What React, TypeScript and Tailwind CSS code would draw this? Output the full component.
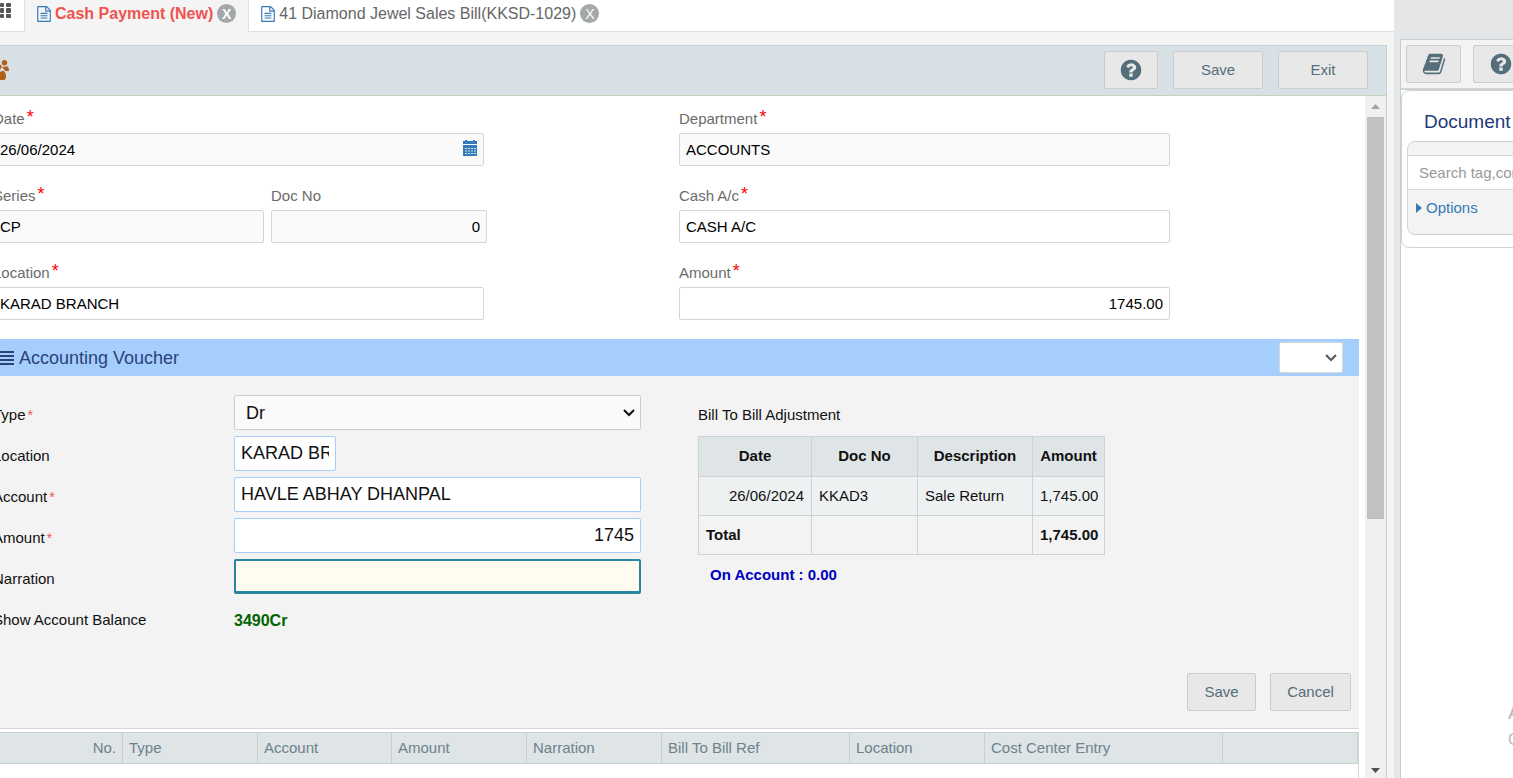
import { useState, type ReactNode, type SelectHTMLAttributes } from "react";

const PATHS = {
  file: "M1468 380q28 28 48 76t20 88v1152q0 40-28 68t-68 28h-1344q-40 0-68-28t-28-68v-1600q0-40 28-68t68-28h896q40 0 88 20t76 48zm-444-244v376h376q-10-29-22-41l-313-313q-12-12-41-22zm384 1528v-1024h-416q-40 0-68-28t-28-68v-416h-768v1536h1280zm-1024-864q0-14 9-23t23-9h704q14 0 23 9t9 23v64q0 14-9 23t-23 9h-704q-14 0-23-9t-9-23v-64zm736 224q14 0 23 9t9 23v64q0 14-9 23t-23 9h-704q-14 0-23-9t-9-23v-64q0-14 9-23t23-9h704zm0 256q14 0 23 9t9 23v64q0 14-9 23t-23 9h-704q-14 0-23-9t-9-23v-64q0-14 9-23t23-9h704z",
  help: "M1024 1376v-192q0-14-9-23t-23-9h-192q-14 0-23 9t-9 23v192q0 14 9 23t23 9h192q14 0 23-9t9-23zm256-672q0-88-55.5-163t-138.5-116-170-41q-243 0-371 213-15 24 8 42l132 100q7 6 19 6 16 0 25-12 53-68 86-92 34-24 86-24 48 0 85.5 26t37.5 59q0 38-20 61t-68 45q-63 28-115.5 86.5t-52.5 125.5v36q0 14 9 23t23 9h192q14 0 23-9t9-23q0-19 21.5-49.5t54.5-49.5q32-18 49-28.5t46-35 44.5-48 28-60.5 12.5-81zm384 192q0 209-103 385.5t-279.5 279.5-385.5 103-385.5-103-279.5-279.5-103-385.5 103-385.5 279.5-279.5 385.5-103 385.5 103 279.5 279.5 103 385.5z",
  book: "M1703 478q40 57 18 129l-275 906q-19 64-76.5 107.5t-122.5 43.5h-923q-77 0-148.5-53.5t-99.5-131.5q-24-67-2-127 0-4 3-27t4-37q1-8-3-21.5t-3-19.5q2-11 8-21t16.5-23.5 16.5-23.5q23-38 45-91.5t30-91.5q3-10 .5-30t-.5-28q3-11 17-28t17-23q21-36 42-92t25-90q1-9-2.5-32t.5-28q4-13 22-30.5t22-22.5q19-26 42.5-84.5t27.5-96.5q1-8-3-25.5t-2-26.5q2-8 9-18t18-23 17-21q8-12 16.5-30.5t15-35 16-36 19.5-32 26.5-23.5 36-11.5 47.5 5.5l-1 3q38-9 51-9h761q74 0 114 56t18 130l-274 906q-36 119-71.5 153.5t-128.5 34.5h-869q-27 0-38 15-11 16-1 43 24 70 144 70h923q29 0 56-15.5t35-41.5l300-987q7-22 5-57 38 15 59 43zm-1064 2q-4 13 2 22.5t20 9.5h608q13 0 25.5-9.5t16.5-22.5l21-64q4-13-2-22.5t-20-9.5h-608q-13 0-25.5 9.5t-16.5 22.5zm-83 256q-4 13 2 22.5t20 9.5h608q13 0 25.5-9.5t16.5-22.5l21-64q4-13-2-22.5t-20-9.5h-608q-13 0-25.5 9.5t-16.5 22.5z",
};

const ENTRY_COLUMNS = [
  { label: "No.", col: "w-[129px]" },
  { label: "Type", col: "w-[135px]" },
  { label: "Account", col: "w-[134px]" },
  { label: "Amount", col: "w-[135px]" },
  { label: "Narration", col: "w-[135px]" },
  { label: "Bill To Bill Ref", col: "w-[188px]" },
  { label: "Location", col: "w-[135px]" },
  { label: "Cost Center Entry", col: "w-[238px]" },
  { label: "", col: "" },
];

const BUTTON = "h-[38px] shrink-0 flex items-center justify-center rounded-xs border border-[#cccccc] bg-[#e8e8e8] text-[#546e7a]";
const CELL = "border border-[#ccd2d5] px-[7px]";

function FileIcon() {
  return (
    <svg className="shrink-0" width="14" height="16" viewBox="0 0 1536 1792" fill="#337ab7"><path d={PATHS.file} /></svg>
  );
}

function Tab({ title, active = false }: { title: string; active?: boolean }) {
  return (
    <div
      className={
        active
          ? "flex items-center h-8 px-3 pb-[5px] bg-[#f4f4f4] text-[#ef5350] font-bold"
          : "flex items-center flex-1 h-8 pl-3 pb-1 border-l border-b border-[#e0e0e0] bg-white text-[#666666]"
      }
    >
      <FileIcon />
      <a href="#" className="ml-1 text-base whitespace-nowrap">{title}</a>
      <button
        aria-label="Close tab"
        className="ml-1 flex size-[19px] items-center justify-center rounded-full bg-[#a3a8a8] text-sm leading-none text-white"
      >
        X
      </button>
    </div>
  );
}

function Select({ width, className, children, ...rest }: SelectHTMLAttributes<HTMLSelectElement> & { width: string }) {
  return (
    <div className={`relative ${width}`}>
      <select {...rest} className={`block w-full appearance-none rounded-xs border outline-none ${className}`}>
        {children}
      </select>
      <svg
        className="pointer-events-none absolute top-1/2 right-[6px] -translate-y-1/2"
        width="12"
        height="8"
        viewBox="0 0 12 8"
        fill="none"
        stroke="currentColor"
        strokeWidth="2"
      >
        <path d="M1 1l5 5 5-5" />
      </svg>
    </div>
  );
}

interface FieldProps {
  id: string;
  label: string;
  value: string;
  required?: boolean;
  readOnly?: boolean;
  numeric?: boolean;
  children?: ReactNode;
}

function Field({ id, label, value, required, readOnly, numeric, children }: FieldProps) {
  return (
    <div className="relative w-full">
      <label htmlFor={id} className="flex h-6 text-[#6b6b6b] leading-5">
        {label}
        {required && <span className="ml-[2px] text-lg leading-4 text-[#ff0000]">*</span>}
      </label>
      <input
        id={id}
        defaultValue={value}
        readOnly={readOnly}
        className={`block w-full h-[33px] rounded-xs border border-[#d5d5d5] px-[6px] text-black outline-none ${
          readOnly ? "bg-[#fafafa]" : "bg-white"
        } ${numeric ? "text-right" : ""}`}
      />
      {children}
    </div>
  );
}

function VoucherRow({ id, label, required, children }: { id: string; label: string; required?: boolean; children: ReactNode }) {
  return (
    <div className="flex h-[35px]">
      <label htmlFor={id} className="flex w-[241px] shrink-0 items-center pt-[5px]">
        {label}
        {required && <span className="ml-[2px] text-sm leading-4 text-[#ef5350]">*</span>}
      </label>
      {children}
    </div>
  );
}

const VOUCHER_INPUT = "h-[35px] rounded-xs border border-[#a6cefd] bg-white px-[6px] text-lg outline-none";

function VoucherForm() {
  const [type, setType] = useState("Dr");
  return (
    <div className="flex w-[648px] shrink-0 flex-col gap-[6px]">
      <VoucherRow id="v-type" label="Type" required>
        <Select
          id="v-type"
          width="w-full"
          value={type}
          onChange={(e) => setType(e.target.value)}
          className="h-[35px] border-[#cccccc] bg-[#fafafa] px-[11px] text-lg"
        >
          <option>Dr</option>
          <option>Cr</option>
        </Select>
      </VoucherRow>
      <VoucherRow id="v-location" label="Location">
        <input id="v-location" defaultValue="KARAD BRANCH" className={`${VOUCHER_INPUT} w-[102px]`} />
      </VoucherRow>
      <VoucherRow id="v-account" label="Account" required>
        <input id="v-account" defaultValue="HAVLE ABHAY DHANPAL" className={`${VOUCHER_INPUT} w-full`} />
      </VoucherRow>
      <VoucherRow id="v-amount" label="Amount" required>
        <input id="v-amount" defaultValue="1745" className={`${VOUCHER_INPUT} w-full text-right`} />
      </VoucherRow>
      <VoucherRow id="v-narration" label="Narration">
        <input
          id="v-narration"
          className="w-full h-[35px] rounded-xs border-2 border-b-3 border-[#2a85a0] bg-[#fffbf0] px-[6px] text-lg outline-none"
        />
      </VoucherRow>
      <VoucherRow id="v-balance" label="Show Account Balance">
        <output id="v-balance" className="pt-[5px] text-base leading-8 font-bold text-[#006400]">3490Cr</output>
      </VoucherRow>
    </div>
  );
}

function BillAdjustment() {
  return (
    <div className="ml-[57px]">
      <p className="h-[41px] pt-[10px] leading-5">Bill To Bill Adjustment</p>
      <table className="w-[407px] table-fixed border-collapse">
        <colgroup>
          <col className="w-[113px]" />
          <col className="w-[106px]" />
          <col className="w-[115px]" />
          <col />
        </colgroup>
        <thead>
          <tr className="h-10 bg-[#dfe4e6]">
            {["Date", "Doc No", "Description", "Amount"].map((h) => (
              <th key={h} className={`${CELL} text-center`}>{h}</th>
            ))}
          </tr>
        </thead>
        <tbody>
          <tr className="h-[39px] bg-[#edf1f2]">
            <td className={`${CELL} text-right`}>26/06/2024</td>
            <td className={CELL}>KKAD3</td>
            <td className={CELL}>Sale Return</td>
            <td className={`${CELL} text-right`}>1,745.00</td>
          </tr>
          <tr className="h-[39px] font-bold">
            <td className={CELL}>Total</td>
            <td className={CELL} />
            <td className={CELL} />
            <td className={`${CELL} text-right`}>1,745.00</td>
          </tr>
        </tbody>
      </table>
      <p className="mt-[10px] ml-3 leading-5 font-bold text-[#0000c0]">On Account : 0.00</p>
    </div>
  );
}

function DocumentPanel() {
  return (
    <aside className="flex w-[119px] shrink-0 flex-col overflow-hidden bg-[#e4e6e8] pl-[6px] pt-[39px]">
      <div className="flex w-[300px] flex-1 flex-col border-l border-t border-[#c5ced2] bg-white">
        <div className="flex h-[50px] shrink-0 gap-3 border-b-2 border-[#d0d3d5] bg-[#f4f4f4] pl-[5px] pt-[5px]">
          <button aria-label="Library" className={`${BUTTON} w-[55px]`}>
            <svg width="24" height="24" viewBox="0 0 1792 1792" fill="currentColor"><path d={PATHS.book} /></svg>
          </button>
          <button aria-label="Help" className={`${BUTTON} w-[55px]`}>
            <svg width="24" height="24" viewBox="0 0 1792 1792" fill="currentColor"><path d={PATHS.help} /></svg>
          </button>
        </div>
        <section className="h-[158px] rounded-lg border border-[#d0d3d5] pl-[5px]">
          <h2 className="h-[50px] pl-[17px] text-[19px] leading-[62px] text-[#1f3a7a]">Document</h2>
          <div className="h-[94px] rounded-lg border border-[#d0d3d5] bg-[#f3f3f3] pt-[13px]">
            <input
              aria-label="Search documents"
              placeholder="Search tag,comment"
              className="block h-[35px] w-full border border-l-0 border-[#d8d8d8] bg-white pl-[11px] outline-none placeholder:text-[#999999]"
            />
            <button className="mt-2 ml-2 flex items-center leading-5 text-[#337ab7]">
              <svg className="mr-1" width="6" height="10" viewBox="0 0 6 10" fill="currentColor"><path d="M0 0l6 5-6 5z" /></svg>
              Options
            </button>
          </div>
        </section>
      </div>
    </aside>
  );
}

export default function App() {
  return (
    <div className="relative flex h-screen overflow-hidden bg-[#f4f4f4] font-['Liberation_Sans',Arial,sans-serif] text-[15px] text-[#111111]">
      <main className="flex min-w-0 flex-1 flex-col">
        <nav className="flex h-8 shrink-0">
          <button aria-label="All modules" className="h-8 w-[25px] border-r border-b border-[#e0e0e0] bg-white">
            <svg className="-mt-[9px]" width="12" height="16" viewBox="0 0 12 16" fill="#555555">
              <rect y="0" width="4" height="4" rx="1" />
              <rect x="6" y="0" width="5" height="4" rx="1" />
              <rect y="5" width="4" height="5" rx="1" />
              <rect x="6" y="5" width="5" height="5" rx="1" />
              <rect y="11" width="4" height="4" rx="1" />
              <rect x="6" y="11" width="5" height="4" rx="1" />
            </svg>
          </button>
          <Tab title="Cash Payment (New)" active />
          <Tab title="41 Diamond Jewel Sales Bill(KKSD-1029)" />
        </nav>

        <div className="mt-[13px] mr-[7px] flex min-h-0 flex-1 flex-col border-t border-r border-[#c5d0d5] bg-white">
          {/* Title bar */}
          <header className="flex h-[50px] shrink-0 items-start border-b border-[#c8cfba] bg-[#d6e0e5] pt-[5px] pr-[18px]">
            <svg className="mt-[9px]" width="9" height="20" viewBox="0 0 9 20" fill="#b45f17">
              <circle cx="4.5" cy="2.7" r="2.7" />
              <path d="M3 6.2q1.5 1.2 3.4 0Q9 6 9 11H5Q4 8.500 2.600 8z" />
              <path d="M0 4.500Q2.300 5.500 1.500 8L0 9.300z" />
              <path d="M0 11.500Q1 12 2.500 10.800 6 11 6 17 6 20 3.500 20H0z" />
            </svg>
            <div className="ml-auto flex gap-[15px]">
              <button aria-label="Help" className={`${BUTTON} w-[54px]`}>
                <svg width="24" height="24" viewBox="0 0 1792 1792" fill="currentColor"><path d={PATHS.help} /></svg>
              </button>
              <button className={`${BUTTON} w-[90px]`}>Save</button>
              <button className={`${BUTTON} w-[90px]`}>Exit</button>
            </div>
          </header>

          <div className="flex min-h-0 flex-1">
            {/* The form hangs a few pixels off the left edge of the pane */}
            <div className="min-w-0 flex-1 overflow-hidden">
              <div className="-ml-[7px]">
                <div className="grid grid-cols-2 pt-[13px]">
                  <div className="flex w-full max-w-[491px] flex-col gap-5">
                    <Field id="date" label="Date" value="26/06/2024" required readOnly>
                      <svg className="absolute right-[7px] bottom-[10px]" width="14" height="16" viewBox="0 0 14 16" fill="#337ab7">
                        <path d="M0 1h2V0h2v1h6V0h2v1h2v3H0zM0 5h14v11H0z" />
                        <path d="M2 8.500h11M2 11h11M2 13.500h11" stroke="#ffffff" strokeDasharray="2 1" fill="none" opacity="0.8" />
                      </svg>
                    </Field>
                    <div className="-mr-[3px] flex gap-[7px]">
                      <Field id="series" label="Series" value="CP" required readOnly />
                      <div className="w-[216px] shrink-0">
                        <Field id="doc-no" label="Doc No" value="0" readOnly numeric />
                      </div>
                    </div>
                    <Field id="location" label="Location" value="KARAD BRANCH" required />
                  </div>
                  <div className="flex w-full max-w-[491px] flex-col gap-5">
                    <Field id="department" label="Department" value="ACCOUNTS" required readOnly />
                    <Field id="cash-ac" label="Cash A/c" value="CASH A/C" required />
                    <Field id="amount" label="Amount" value="1745.00" required numeric />
                  </div>
                </div>

                {/* Accounting voucher */}
                <section className="mt-[19px] mr-[6px]">
                  <div className="flex h-[37px] items-center bg-[#a6cefd] pl-[7px] pr-4 text-[#28427a]">
                    <svg width="14" height="14" viewBox="0 0 14 14" fill="currentColor">
                      <path d="M0 0h14v2H0zM0 4h14v2H0zM0 8h14v2H0zM0 12h14v2H0z" />
                    </svg>
                    <h2 className="ml-[5px] text-lg">Accounting Voucher</h2>
                    <div className="ml-auto text-[#555555]">
                      <Select width="w-16" aria-label="Voucher view" className="h-[31px] border-[#d8d8d8] bg-white">
                        <option></option>
                      </Select>
                    </div>
                  </div>
                  <div className="border-b border-[#d5d5d5] bg-[#f3f3f3] pt-[19px]">
                    <div className="flex">
                      <VoucherForm />
                      <BillAdjustment />
                    </div>
                    <div className="mt-[38px] flex justify-end gap-[14px] pr-2 pb-[17px]">
                      <button className={`${BUTTON} w-[69px]`}>Save</button>
                      <button className={`${BUTTON} w-[81px]`}>Cancel</button>
                    </div>
                  </div>
                </section>

                <div className="mt-[3px] mr-[6px] h-40 border-r border-[#d5d5d5]">
                  <table className="w-full table-fixed border-collapse">
                    <colgroup>
                      {ENTRY_COLUMNS.map((c) => <col key={c.label} className={c.col} />)}
                    </colgroup>
                    <thead>
                      <tr className="h-[31px] bg-[#dfe4e6] text-[#6b838d]">
                        {ENTRY_COLUMNS.map((c) => (
                          <th
                            key={c.label}
                            className={`border border-[#c8d0d3] px-[6px] font-normal ${c.label === "No." ? "text-right" : "text-left"}`}
                          >
                            {c.label}
                          </th>
                        ))}
                      </tr>
                    </thead>
                  </table>
                </div>
              </div>
            </div>

            {/* Scroll bar */}
            <div className="flex w-[21px] shrink-0 flex-col bg-[#f0f0f0]">
              <div className="flex h-[21px] items-center justify-center">
                <svg width="9" height="5" viewBox="0 0 9 5" fill="#a3a3a3"><path d="M0 5l4.5-5L9 5z" /></svg>
              </div>
              <div className="mx-[2px] h-[59%] bg-[#c1c1c1]" />
              <div className="mt-auto flex h-4 items-center justify-center">
                <svg width="9" height="5" viewBox="0 0 9 5" fill="#505050"><path d="M0 0l4.5 5L9 0z" /></svg>
              </div>
            </div>
          </div>
        </div>
      </main>

      <DocumentPanel />

      {/* Desktop watermark running off the right edge */}
      <div className="pointer-events-none absolute right-0 bottom-6 w-[5px] overflow-hidden text-[#b8b8b8]">
        <p className="text-xl leading-7">A</p>
        <p className="text-base leading-7">G</p>
      </div>
    </div>
  );
}
